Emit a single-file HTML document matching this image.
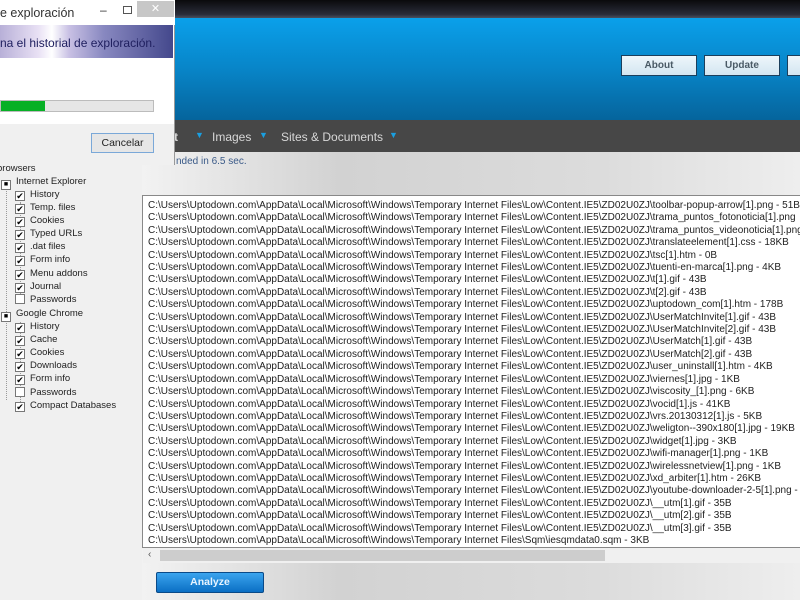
<!DOCTYPE html>
<html><head><meta charset="utf-8"><style>
*{margin:0;padding:0;box-sizing:border-box}
body{width:800px;height:600px;overflow:hidden;position:relative;font-family:"Liberation Sans",sans-serif;background:#f0f0f0}
.abs{position:absolute}
#top{left:0;top:0;width:800px;height:18px;background:linear-gradient(#0a0a0c,#2a2d3a 80%,#4a5060)}
#blue{left:0;top:18px;width:800px;height:102px;background:linear-gradient(#0aa0ea,#0885c8 50%,#05649c)}
#nav{left:0;top:120px;width:800px;height:32px;background:#474747;color:#d8d8d8;font-size:12px}
#content{left:142px;top:152px;width:658px;height:448px;background:linear-gradient(90deg,#f2f2f2,#d2d2d2 30%,#dcdcdc 70%,#eeeeee)}
.hb{top:55px;height:21px;background:linear-gradient(#eef6fb,#d3e6f1);border:1px solid #1b3f5c;font-size:10px;font-weight:bold;color:#4a5a66;text-align:center;line-height:19px}
#list{left:142px;top:195px;width:658px;height:353px;background:#fff;border:1px solid #888;border-right:none;overflow:hidden}
#rows{padding-top:4px;padding-left:5px}
#rows div{font-size:10px;line-height:12.4px;color:#222;white-space:nowrap}
#scroll{left:143px;top:548px;width:657px;height:15px;background:#f0f0f0}
#left{left:0;top:160px;width:142px;height:440px;background:#f0f0f0;font-size:9.5px;color:#222}
.it{position:absolute;white-space:nowrap;height:13px;line-height:13px}
.cb{display:inline-block;width:10px;height:10px;border:1px solid #777;background:#fff;vertical-align:-2px;margin-right:5px;font-size:9px;line-height:8px;text-align:center;color:#000}
#dlg{left:0;top:0;width:175px;height:165px;background:#fff;border-right:1px solid #999;border-bottom:1px solid #999}
</style></head><body>
<div id="top" class="abs"></div>
<div id="blue" class="abs"></div>
<div class="abs hb" style="left:621px;width:76px">About</div>
<div class="abs hb" style="left:704px;width:76px">Update</div>
<div class="abs hb" style="left:787px;width:30px"></div>
<div id="nav" class="abs">
<span class="abs" style="left:174px;top:10px;font-weight:bold">t</span>
<span class="abs" style="left:195px;top:10px;color:#1a9fe0;font-size:9px">▼</span>
<span class="abs" style="left:212px;top:10px">Images</span>
<span class="abs" style="left:259px;top:10px;color:#1a9fe0;font-size:9px">▼</span>
<span class="abs" style="left:281px;top:10px">Sites &amp; Documents</span>
<span class="abs" style="left:389px;top:10px;color:#1a9fe0;font-size:9px">▼</span>
</div>
<div id="content" class="abs"><span class="abs" style="left:34px;top:4px;font-size:10px;color:#3a5a88">nded in 6.5 sec.</span></div>
<div id="list" class="abs"><div id="rows">
<div>C:\Users\Uptodown.com\AppData\Local\Microsoft\Windows\Temporary Internet Files\Low\Content.IE5\ZD02U0ZJ\toolbar-popup-arrow[1].png - 51B</div>
<div>C:\Users\Uptodown.com\AppData\Local\Microsoft\Windows\Temporary Internet Files\Low\Content.IE5\ZD02U0ZJ\trama_puntos_fotonoticia[1].png</div>
<div>C:\Users\Uptodown.com\AppData\Local\Microsoft\Windows\Temporary Internet Files\Low\Content.IE5\ZD02U0ZJ\trama_puntos_videonoticia[1].png</div>
<div>C:\Users\Uptodown.com\AppData\Local\Microsoft\Windows\Temporary Internet Files\Low\Content.IE5\ZD02U0ZJ\translateelement[1].css - 18KB</div>
<div>C:\Users\Uptodown.com\AppData\Local\Microsoft\Windows\Temporary Internet Files\Low\Content.IE5\ZD02U0ZJ\tsc[1].htm - 0B</div>
<div>C:\Users\Uptodown.com\AppData\Local\Microsoft\Windows\Temporary Internet Files\Low\Content.IE5\ZD02U0ZJ\tuenti-en-marca[1].png - 4KB</div>
<div>C:\Users\Uptodown.com\AppData\Local\Microsoft\Windows\Temporary Internet Files\Low\Content.IE5\ZD02U0ZJ\t[1].gif - 43B</div>
<div>C:\Users\Uptodown.com\AppData\Local\Microsoft\Windows\Temporary Internet Files\Low\Content.IE5\ZD02U0ZJ\t[2].gif - 43B</div>
<div>C:\Users\Uptodown.com\AppData\Local\Microsoft\Windows\Temporary Internet Files\Low\Content.IE5\ZD02U0ZJ\uptodown_com[1].htm - 178B</div>
<div>C:\Users\Uptodown.com\AppData\Local\Microsoft\Windows\Temporary Internet Files\Low\Content.IE5\ZD02U0ZJ\UserMatchInvite[1].gif - 43B</div>
<div>C:\Users\Uptodown.com\AppData\Local\Microsoft\Windows\Temporary Internet Files\Low\Content.IE5\ZD02U0ZJ\UserMatchInvite[2].gif - 43B</div>
<div>C:\Users\Uptodown.com\AppData\Local\Microsoft\Windows\Temporary Internet Files\Low\Content.IE5\ZD02U0ZJ\UserMatch[1].gif - 43B</div>
<div>C:\Users\Uptodown.com\AppData\Local\Microsoft\Windows\Temporary Internet Files\Low\Content.IE5\ZD02U0ZJ\UserMatch[2].gif - 43B</div>
<div>C:\Users\Uptodown.com\AppData\Local\Microsoft\Windows\Temporary Internet Files\Low\Content.IE5\ZD02U0ZJ\user_uninstall[1].htm - 4KB</div>
<div>C:\Users\Uptodown.com\AppData\Local\Microsoft\Windows\Temporary Internet Files\Low\Content.IE5\ZD02U0ZJ\viernes[1].jpg - 1KB</div>
<div>C:\Users\Uptodown.com\AppData\Local\Microsoft\Windows\Temporary Internet Files\Low\Content.IE5\ZD02U0ZJ\viscosity_[1].png - 6KB</div>
<div>C:\Users\Uptodown.com\AppData\Local\Microsoft\Windows\Temporary Internet Files\Low\Content.IE5\ZD02U0ZJ\vocid[1].js - 41KB</div>
<div>C:\Users\Uptodown.com\AppData\Local\Microsoft\Windows\Temporary Internet Files\Low\Content.IE5\ZD02U0ZJ\vrs.20130312[1].js - 5KB</div>
<div>C:\Users\Uptodown.com\AppData\Local\Microsoft\Windows\Temporary Internet Files\Low\Content.IE5\ZD02U0ZJ\weligton--390x180[1].jpg - 19KB</div>
<div>C:\Users\Uptodown.com\AppData\Local\Microsoft\Windows\Temporary Internet Files\Low\Content.IE5\ZD02U0ZJ\widget[1].jpg - 3KB</div>
<div>C:\Users\Uptodown.com\AppData\Local\Microsoft\Windows\Temporary Internet Files\Low\Content.IE5\ZD02U0ZJ\wifi-manager[1].png - 1KB</div>
<div>C:\Users\Uptodown.com\AppData\Local\Microsoft\Windows\Temporary Internet Files\Low\Content.IE5\ZD02U0ZJ\wirelessnetview[1].png - 1KB</div>
<div>C:\Users\Uptodown.com\AppData\Local\Microsoft\Windows\Temporary Internet Files\Low\Content.IE5\ZD02U0ZJ\xd_arbiter[1].htm - 26KB</div>
<div>C:\Users\Uptodown.com\AppData\Local\Microsoft\Windows\Temporary Internet Files\Low\Content.IE5\ZD02U0ZJ\youtube-downloader-2-5[1].png -</div>
<div>C:\Users\Uptodown.com\AppData\Local\Microsoft\Windows\Temporary Internet Files\Low\Content.IE5\ZD02U0ZJ\__utm[1].gif - 35B</div>
<div>C:\Users\Uptodown.com\AppData\Local\Microsoft\Windows\Temporary Internet Files\Low\Content.IE5\ZD02U0ZJ\__utm[2].gif - 35B</div>
<div>C:\Users\Uptodown.com\AppData\Local\Microsoft\Windows\Temporary Internet Files\Low\Content.IE5\ZD02U0ZJ\__utm[3].gif - 35B</div>
<div>C:\Users\Uptodown.com\AppData\Local\Microsoft\Windows\Temporary Internet Files\Sqm\iesqmdata0.sqm - 3KB</div>
</div></div>
<div id="scroll" class="abs"><span class="abs" style="left:5px;top:1px;font-size:10px;color:#555">‹</span><div class="abs" style="left:17px;top:2px;width:445px;height:11px;background:#cdcdcd"></div></div>
<div class="abs" style="left:156px;top:572px;width:108px;height:21px;background:linear-gradient(#3aa4ee,#0b6fc4);border:1px solid #0a4a88;border-radius:2px;color:#e8f4ff;font-size:10.5px;font-weight:bold;text-align:center;line-height:19px">Analyze</div>
<div id="left" class="abs">
<div class="it" style="left:-3px;top:2px">browsers</div>
<div class="abs" style="left:6px;top:22px;width:1px;height:218px;border-left:1px dotted #999"></div>
<div class="abs" style="left:20px;top:42px;width:1px;height:98px;border-left:1px dotted #999"></div>
<div class="abs" style="left:20px;top:162px;width:1px;height:84px;border-left:1px dotted #999"></div>
<div class="it" style="left:1px;top:15px"><span class="cb" style="font-size:7px">■</span>Internet Explorer</div>
<div class="it" style="left:15px;top:28px"><span class="cb">✔</span>History</div>
<div class="it" style="left:15px;top:41px"><span class="cb">✔</span>Temp. files</div>
<div class="it" style="left:15px;top:54px"><span class="cb">✔</span>Cookies</div>
<div class="it" style="left:15px;top:67px"><span class="cb">✔</span>Typed URLs</div>
<div class="it" style="left:15px;top:80px"><span class="cb">✔</span>.dat files</div>
<div class="it" style="left:15px;top:93px"><span class="cb">✔</span>Form info</div>
<div class="it" style="left:15px;top:107px"><span class="cb">✔</span>Menu addons</div>
<div class="it" style="left:15px;top:120px"><span class="cb">✔</span>Journal</div>
<div class="it" style="left:15px;top:133px"><span class="cb"></span>Passwords</div>
<div class="it" style="left:1px;top:147px"><span class="cb" style="font-size:7px">■</span>Google Chrome</div>
<div class="it" style="left:15px;top:160px"><span class="cb">✔</span>History</div>
<div class="it" style="left:15px;top:173px"><span class="cb">✔</span>Cache</div>
<div class="it" style="left:15px;top:186px"><span class="cb">✔</span>Cookies</div>
<div class="it" style="left:15px;top:199px"><span class="cb">✔</span>Downloads</div>
<div class="it" style="left:15px;top:212px"><span class="cb">✔</span>Form info</div>
<div class="it" style="left:15px;top:226px"><span class="cb"></span>Passwords</div>
<div class="it" style="left:15px;top:239px"><span class="cb">✔</span>Compact Databases</div>
</div>
<div id="dlg" class="abs">
<div class="abs" style="left:0;top:0;width:175px;height:25px;background:#fff"></div>
<span class="abs" style="left:0;top:6px;font-size:12.5px;color:#333">e exploración</span>
<span class="abs" style="left:100px;top:3px;font-size:12px;color:#333">–</span>
<div class="abs" style="left:123px;top:6px;width:9px;height:8px;border:1px solid #555"></div>
<div class="abs" style="left:137px;top:1px;width:37px;height:16px;background:#c7c7c7;color:#fff;text-align:center;font-size:11px;line-height:16px">✕</div>
<div class="abs" style="left:0;top:25px;width:173px;height:33px;background:linear-gradient(90deg,#b8b0d8,#e8e0f4 22%,#fff 30%,#c8c0e4 40%,#8888c0 60%,#44488c)"></div>
<span class="abs" style="left:0;top:36px;font-size:12px;color:#202060">na el historial de exploración.</span>
<div class="abs" style="left:0;top:100px;width:154px;height:12px;background:#e6e6e6;border:1px solid #bcbcbc"><div style="width:44px;height:10px;background:#06b025"></div></div>
<div class="abs" style="left:0;top:124px;width:174px;height:41px;background:#f0f0f0"></div>
<div class="abs" style="left:91px;top:133px;width:63px;height:20px;border:1px solid #7aa8d8;background:#e6e6e6;font-size:10.5px;color:#222;text-align:center;line-height:18px">Cancelar</div>
</div>
</body></html>
